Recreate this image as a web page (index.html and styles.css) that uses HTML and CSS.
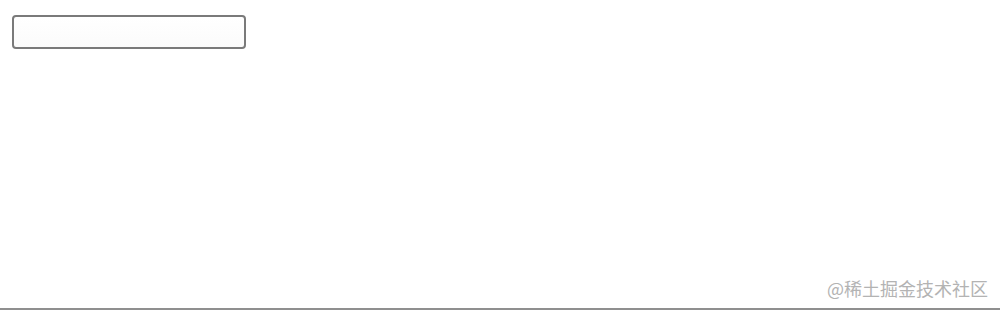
FILE: index.html
```html
<!DOCTYPE html>
<html lang="zh">
<head>
<meta charset="utf-8">
<link rel="stylesheet" href="styles.css">
</head>
<body>
<div class="page">
  <div class="field"></div>
  <div class="watermark">@稀土掘金技术社区</div>
</div>
</body>
</html>
```
FILE: styles.css
```css
html, body {
  margin: 0;
  padding: 0;
  background: #ffffff;
}
.page {
  position: relative;
  box-sizing: border-box;
  height: 310px;
  border-bottom: 2px solid #8f8f8f;
  padding: 15px 12px;
  font-family: "Noto Sans CJK SC", "Noto Sans", sans-serif;
}
.field {
  box-sizing: border-box;
  width: 234px;
  height: 34px;
  border: 2px solid #7a7a7a;
  border-radius: 4px;
  background: linear-gradient(#ffffff, #fbfbfb);
}
.watermark {
  position: absolute;
  right: 12px;
  bottom: 9px;
  font-size: 18px;
  line-height: 22px;
  color: #b3b3b3;
  letter-spacing: 0;
}
```
